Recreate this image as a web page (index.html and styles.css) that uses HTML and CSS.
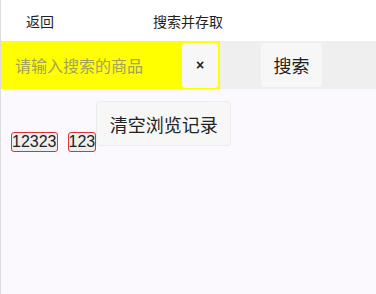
FILE: index.html
```html
<!DOCTYPE html>
<html>
<head>
    <meta charset="utf-8">
    <link rel="stylesheet" href="styles.css">
</head>
<body>
    <div class="page">
        <div class="topbar">
            <span class="back">返回</span>
            <span class="title">搜索并存取</span>
        </div>

        <div class="search-row">
            <div class="input-box">
                <input class="search-input" type="text" placeholder="请输入搜索的商品">
                <button class="clear-btn">×</button>
            </div>
            <button class="search-btn">搜索</button>
        </div>

        <div class="history">
            <span class="tag">12323</span>
            <span class="tag">123</span>
            <button class="clear-history">清空浏览记录</button>
        </div>
    </div>
</body>
</html>
```

FILE: styles.css
```css
html, body {
    margin: 0;
    padding: 0;
}

body {
    font-family: "Liberation Sans", "Noto Sans CJK SC", sans-serif;
    color: #222;
}

.page {
    min-height: 294px;
    background: #fbf9fe;
    border-left: 1px solid #dcdcdc;
}

.topbar {
    height: 41px;
    background: white;
    display: flex;
    align-items: center;
    font-size: 14px;
}

.back {
    margin-left: 25px;
}

.title {
    margin-left: 99px;
}

.search-row {
    height: 48px;
    background: #efefef;
    display: flex;
    align-items: center;
}

.input-box {
    display: flex;
    align-items: center;
    height: 48px;
    background: #ffff00;
    padding-right: 2px;
}

.search-input {
    width: 167px;
    height: 46px;
    border: none;
    outline: none;
    background: transparent;
    padding: 0 0 0 14px;
    font-size: 16px;
    font-family: "Noto Sans CJK SC", sans-serif;
}

.search-input::placeholder {
    color: #a3a35c;
}

button {
    border: none;
    cursor: pointer;
    font-family: "Noto Sans CJK SC", sans-serif;
    color: #222;
    background: #f7f7f7;
    border-radius: 4px;
}

.clear-btn {
    width: 36px;
    height: 45px;
    font-family: "Liberation Sans", sans-serif;
    font-size: 14px;
    font-weight: bold;
    padding: 0;
}

.search-btn {
    margin-left: 41px;
    width: 61px;
    height: 44px;
    font-size: 18px;
    padding: 0;
}

.history {
    display: flex;
    align-items: flex-start;
    padding-top: 12px;
}

.tag {
    margin-top: 31px;
    margin-left: 10px;
    padding: 0;
    font-size: 16px;
    line-height: 18px;
    border: 1px solid #d9323a;
    border-radius: 3px;
    background: #eeeeee;
}

.clear-history {
    width: 135px;
    height: 45px;
    font-size: 18px;
    padding: 0;
    border: 1px solid #ececec;
}
```
